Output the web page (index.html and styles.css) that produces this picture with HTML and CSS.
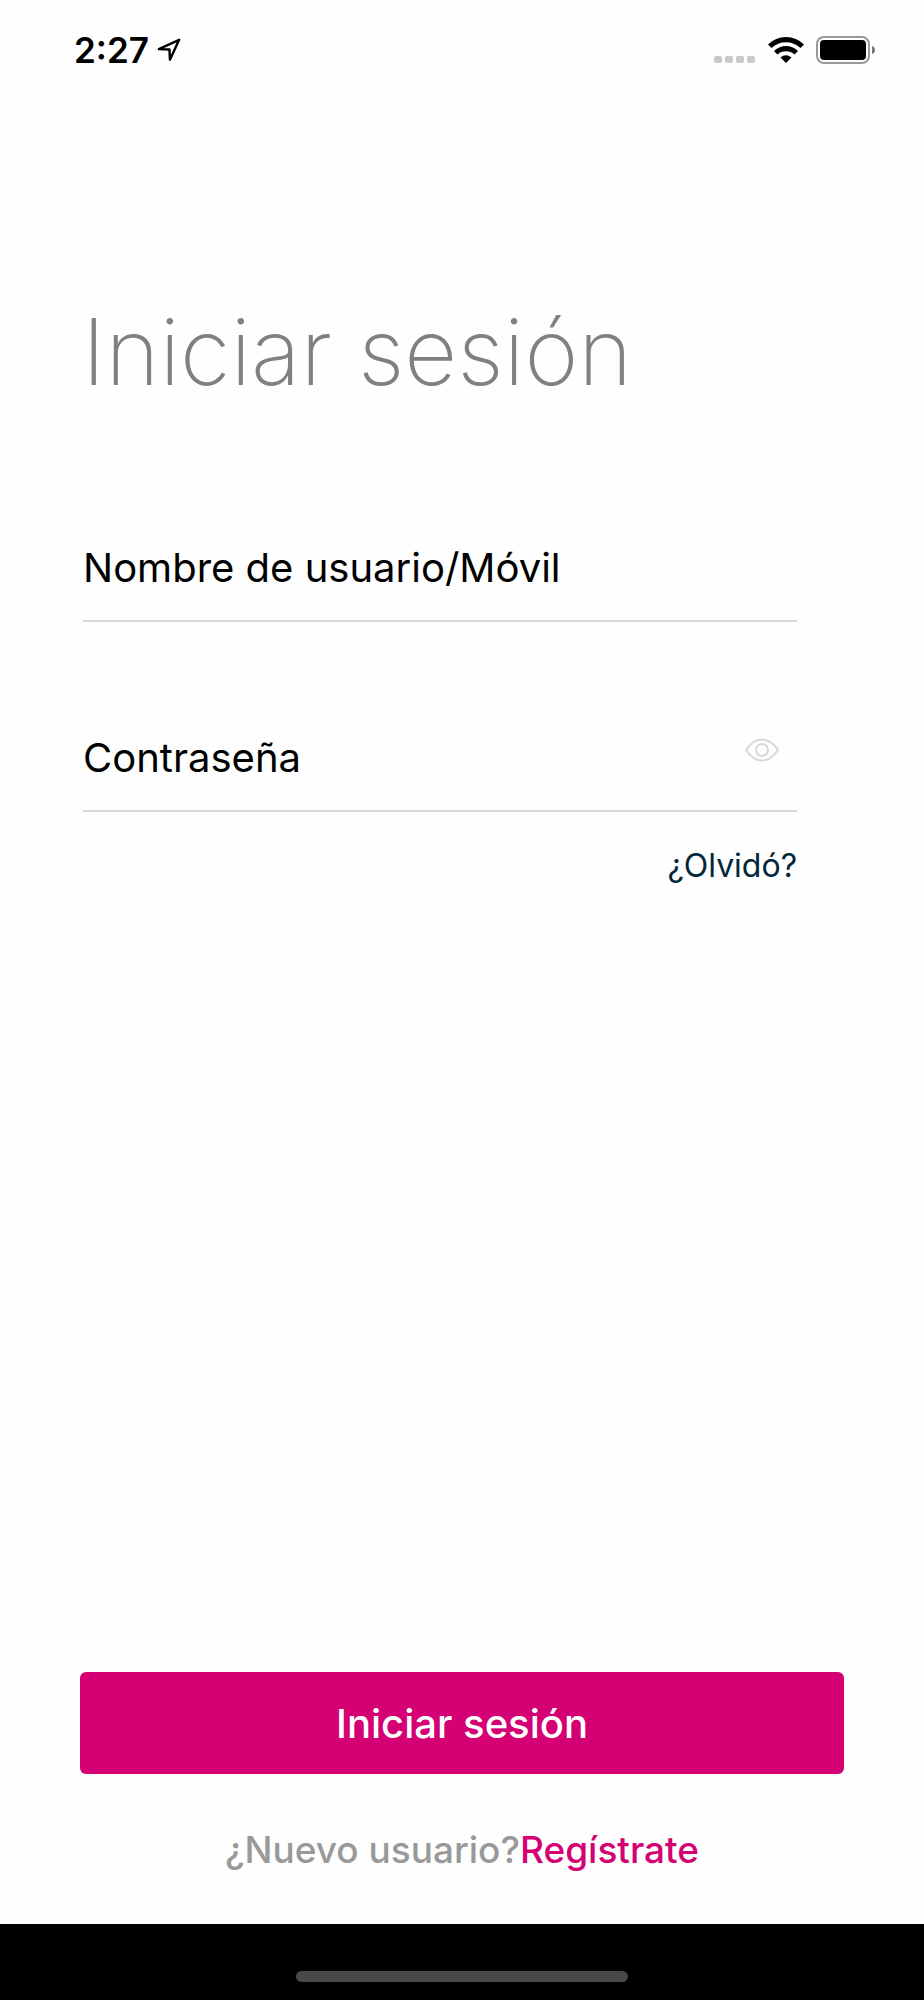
FILE: index.html
```html
<!DOCTYPE html>
<html lang="es">
<head>
  <meta charset="utf-8">
  <meta name="viewport" content="width=device-width, initial-scale=1">
  <title>Iniciar sesión</title>
  <link rel="stylesheet" href="styles.css">
</head>
<body>
  <header class="status">
    <div class="status-group">
      <time class="clock">2:27</time>
      <svg class="arrow" width="24" height="24" viewBox="0 0 26 26" aria-hidden="true">
        <path d="M2 12 24 2 14 23.500 13.500 12.500Z" fill="none" stroke="#000" stroke-width="2.600" stroke-linejoin="round"/>
      </svg>
    </div>
    <div class="status-group status-icons">
      <svg width="42" height="28" viewBox="0 0 42 28" fill="#cacaca" aria-hidden="true">
        <rect x="0" y="20" width="8" height="7" rx="2"/><rect x="11" y="20" width="8" height="7" rx="2"/><rect x="22" y="20" width="8" height="7" rx="2"/><rect x="33" y="20" width="8" height="7" rx="2"/>
      </svg>
      <svg width="36" height="28" viewBox="0 0 36 28" aria-hidden="true">
        <path d="M0 8.500Q7.500 1 18 1T36 8.500L32.500 12Q26 6.300 18 6.300T3.500 12Z"/>
        <path d="M6 15Q11.500 10 18 10T30 15L26.500 18.500Q23 15.300 18 15.300T9.500 18.500Z"/>
        <path d="M12.500 21.500Q15 19.300 18 19.300T23.500 21.500L18 27Z"/>
      </svg>
      <svg width="60" height="28" viewBox="0 0 60 28" aria-hidden="true">
        <rect x="1" y="1" width="52" height="26" rx="7" fill="none" stroke="#999" stroke-width="2"/>
        <rect x="4" y="4" width="46" height="20" rx="4"/>
        <path d="M56 10Q59 11 59 14T56 18Z" fill="#777"/>
      </svg>
    </div>
  </header>

  <main class="login">
    <h1 class="title">Iniciar sesión</h1>
    <form class="form">
      <div class="fields">
        <div class="field">
          <label class="label" for="user">Nombre de usuario/Móvil</label>
          <input class="input" id="user" type="text" autocomplete="username">
        </div>
        <div class="field">
          <label class="label" for="password">Contraseña</label>
          <input class="input" id="password" type="password" autocomplete="current-password">
          <button class="reveal" type="button" aria-label="Mostrar contraseña">
            <svg width="34" height="24" viewBox="0 0 34 24" fill="none" stroke="#d8d8d8" stroke-width="2" stroke-linejoin="round" aria-hidden="true">
              <path d="M1 12Q8 1.500 17 1.500T33 12Q26 22.500 17 22.500T1 12Z"/>
              <circle cx="17" cy="12" r="6"/>
            </svg>
          </button>
        </div>
        <a class="forgot" href="#">¿Olvidó?</a>
      </div>
      <div class="actions">
        <button class="submit" type="submit">Iniciar sesión</button>
        <p class="signup">¿Nuevo usuario?<a class="signup-link" href="#">Regístrate</a></p>
      </div>
    </form>
  </main>
  <footer class="home"><div class="home-bar"></div></footer>
</body>
</html>
```
FILE: styles.css
```css
* {
  box-sizing: border-box;
}

body {
  display: flex;
  flex-direction: column;
  min-height: 100vh;
  margin: 0;
  background: #fefefe;
  color: #000;
  font-family: Inter, "Liberation Sans", sans-serif;
}

.status {
  display: flex;
  align-items: center;
  justify-content: space-between;
  height: 100px;
  padding: 0 48px 0 74px;
}

.status-group {
  display: flex;
  align-items: center;
  gap: 8px;
}

.status-icons {
  gap: 12px;
}

.clock {
  font-size: 35px;
  font-weight: 600;
  line-height: 40px;
}

.login {
  display: flex;
  flex: 1;
  flex-direction: column;
  padding: 192px 80px 52px;
}

.title {
  margin: 0;
  padding-left: 2px;
  color: #808080;
  font-size: 92px;
  font-weight: 200;
  line-height: 120px;
}

.form {
  display: flex;
  flex: 1;
  flex-direction: column;
  justify-content: space-between;
}

.fields {
  display: flex;
  flex-direction: column;
  gap: 66px;
  margin: 86px 47px 0 3px;
}

.field {
  display: grid;
  grid-template-columns: 1fr auto;
  height: 124px;
  border-bottom: 2px solid #d8d8d8;
}

.label,
.input {
  grid-area: 1 / 1;
  align-self: end;
  font-size: 40px;
  font-weight: 400;
  line-height: 48px;
  padding: 0 0 28px;
}

.label {
  pointer-events: none;
}

.input {
  width: 100%;
  border: 0;
  background: transparent;
  font-family: inherit;
}

.reveal {
  grid-area: 1 / 2;
  align-self: end;
  padding: 0 18px 48px;
  border: 0;
  background: transparent;
}

.reveal svg {
  display: block;
}

.forgot {
  align-self: flex-end;
  margin-top: -30px;
  color: #02263a;
  font-size: 32px;
  font-weight: 400;
  line-height: 36px;
  text-decoration: none;
}

.submit {
  width: 100%;
  height: 102px;
  border: 0;
  border-radius: 6px;
  background: #d40074;
  color: #fff;
  font-family: inherit;
  font-size: 40px;
  font-weight: 500;
}

.signup {
  margin: 54px 0 0;
  color: #999;
  font-size: 37px;
  font-weight: 500;
  line-height: 44px;
  text-align: center;
}

.signup-link {
  color: #d40074;
  text-decoration: none;
}

.home {
  display: flex;
  justify-content: center;
  height: 76px;
  padding-top: 47px;
  background: #000;
}

.home-bar {
  width: 36%;
  height: 11px;
  border-radius: 6px;
  background: #484848;
}
```
